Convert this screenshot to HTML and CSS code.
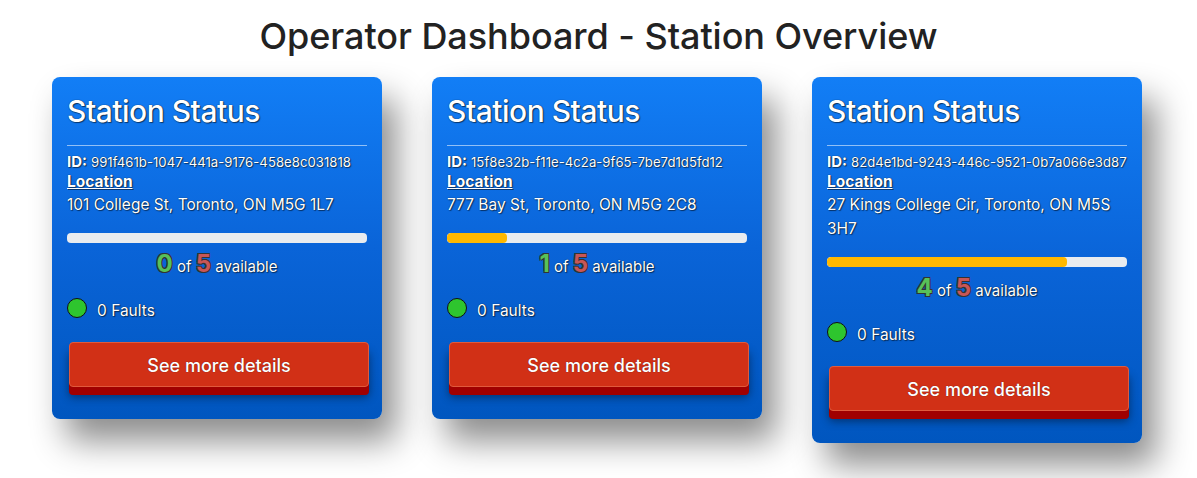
FILE: index.html
```html
<!DOCTYPE html>
<html>
<head>
<meta charset="utf-8">
<link rel="stylesheet" href="styles.css">
</head>
<body>
<h1 class="page-title">Operator Dashboard - Station Overview</h1>
<div class="cards">
  <div class="card">
    <h2 class="card-title">Station Status</h2>
    <hr class="divider">
    <div class="id-line"><b>ID:</b> <span class="id-val">991f461b-1047-441a-9176-458e8c031818</span></div>
    <div class="loc-label">Location</div>
    <div class="address">101 College St, Toronto, ON M5G 1L7</div>
    <div class="bar"><div class="fill" style="width:0%"></div></div>
    <div class="avail"><span class="num green">0</span> of <span class="num red">5</span> available</div>
    <div class="faults"><span class="dot"></span><span>0 Faults</span></div>
    <button class="btn">See more details</button>
  </div>
  <div class="card">
    <h2 class="card-title">Station Status</h2>
    <hr class="divider">
    <div class="id-line"><b>ID:</b> <span class="id-val">15f8e32b-f11e-4c2a-9f65-7be7d1d5fd12</span></div>
    <div class="loc-label">Location</div>
    <div class="address">777 Bay St, Toronto, ON M5G 2C8</div>
    <div class="bar"><div class="fill" style="width:20%"></div></div>
    <div class="avail"><span class="num green">1</span> of <span class="num red">5</span> available</div>
    <div class="faults"><span class="dot"></span><span>0 Faults</span></div>
    <button class="btn">See more details</button>
  </div>
  <div class="card">
    <h2 class="card-title">Station Status</h2>
    <hr class="divider">
    <div class="id-line"><b>ID:</b> <span class="id-val">82d4e1bd-9243-446c-9521-0b7a066e3d87</span></div>
    <div class="loc-label">Location</div>
    <div class="address">27 Kings College Cir, Toronto, ON M5S 3H7</div>
    <div class="bar"><div class="fill" style="width:80%"></div></div>
    <div class="avail"><span class="num green">4</span> of <span class="num red">5</span> available</div>
    <div class="faults"><span class="dot"></span><span>0 Faults</span></div>
    <button class="btn">See more details</button>
  </div>
</div>
</body>
</html>
```

FILE: styles.css
```css
* { box-sizing: border-box; }
html, body { margin: 0; padding: 0; background: #fff; }
body {
  font-family: Inter, Roboto, "Liberation Sans", Arial, sans-serif;
  color: #212529;
  min-height: 478px;
}
.page-title {
  margin: 0;
  padding-top: 14px;
  text-align: center;
  font-size: 36px;
  font-weight: 500;
  line-height: 44px;
  color: #222;
  letter-spacing: -0.05px;
}
.cards {
  display: flex;
  justify-content: center;
  align-items: flex-start;
  gap: 50px;
  margin-top: 19px;
  padding-right: 3px;
}
.card {
  width: 330px;
  padding: 15px 15px 24px 15px;
  border-radius: 8px;
  background: linear-gradient(180deg, #127ef6 0%, #0a64d8 50%, #0056bf 100%);
  color: #fff;
  box-shadow: 14px 22px 34px rgba(0,0,0,0.45);
  text-shadow: 0 0 1px rgba(0,0,0,0.9), 1px 1px 1px rgba(0,0,0,0.5);
}
.card-title {
  margin: 0 0 8px 0;
  font-size: 30px;
  font-weight: 500;
  line-height: 38px;
  letter-spacing: -0.5px;
}
.divider {
  margin: 15px 0 6px 0;
  border: 0;
  border-top: 1px solid rgba(255,255,255,0.55);
}
.id-line { font-size: 14px; line-height: 19px; }
.id-line b { font-weight: 700; font-size: 15px; }
.id-val { font-size: 13.2px; }
.loc-label {
  font-size: 15.5px;
  font-weight: 700;
  text-decoration: underline;
  line-height: 20px;
}
.address {
  font-size: 15.5px;
  line-height: 24px;
  margin-top: 1px;
}
.bar {
  margin-top: 16px;
  height: 10px;
  border-radius: 4px;
  background: #e9ecef;
  overflow: hidden;
}
.fill {
  height: 100%;
  background: #ffb800;
  border-radius: 4px;
}
.avail {
  text-align: center;
  font-size: 15px;
  line-height: 28px;
  margin-top: 7px;
}
.num {
  font-size: 24px;
  font-weight: 700;
  text-shadow: -1px -1px 0 #333, 1px -1px 0 #333, -1px 1px 0 #333, 1px 1px 0 #333;
}
.green { color: #58c158; }
.red { color: #c85656; }
.faults {
  display: flex;
  align-items: center;
  gap: 10px;
  margin-top: 17px;
  font-size: 15.5px;
}
.faults span:last-child { position: relative; top: 2px; }
.dot {
  width: 20px;
  height: 20px;
  border-radius: 50%;
  background: #2ec52e;
  border: 1px solid #111;
}
.btn {
  display: block;
  width: 300px;
  height: 45px;
  margin: 24px 0 8px 2px;
  padding-top: 3px;
  border: 1px solid #e05a3c;
  border-radius: 4px;
  background: #d13016;
  color: #fff;
  font-family: inherit;
  font-size: 18px;
  font-weight: 500;
  text-shadow: 0 0 1px rgba(0,0,0,0.6);
  box-shadow: 0 8px 0 #a00000, 0 10px 10px rgba(0,0,0,0.45);
}
```
